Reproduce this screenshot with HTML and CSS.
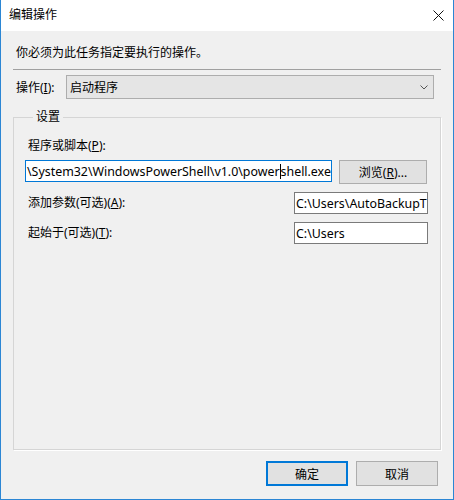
FILE: index.html
```html
<!DOCTYPE html>
<html lang="zh-CN">
<head>
<meta charset="utf-8">
<title>编辑操作</title>
<link rel="stylesheet" href="styles.css">
</head>
<body>
<div class="window">
  <div class="titlebar">
    <span class="title">编辑操作</span>
    <svg class="close" width="11" height="11" viewBox="0 0 11 11"><path d="M0.5 0.5 L10.5 10.5 M10.5 0.5 L0.5 10.5" stroke="#111" stroke-width="1" fill="none"/></svg>
  </div>
  <div class="content">
    <div class="desc">你必须为此任务指定要执行的操作。</div>
    <div class="sep"></div>
    <div class="action-row">
      <span class="action-label">操作(<u>I</u>):</span>
      <div class="select">
        <span>启动程序</span>
        <svg class="chev" width="8" height="5" viewBox="0 0 8 5"><path d="M0.5 0.5 L4 4 L7.5 0.5" stroke="#555" stroke-width="1" fill="none"/></svg>
      </div>
    </div>
    <fieldset class="group">
      <legend>设置</legend>
      <div class="lbl first">程序或脚本(<u>P</u>):</div>
      <div class="prog-row">
        <div class="input prog"><span class="path">\System32\WindowsPowerShell\v1.0\power<span class="caret"></span>shell.exe</span></div>
        <div class="btn browse">浏览(<u>R</u>)...</div>
      </div>
      <div class="field-row">
        <span class="lbl">添加参数(可选)(<u>A</u>):</span>
        <div class="input small">C:\Users\AutoBackupT</div>
      </div>
      <div class="field-row">
        <span class="lbl">起始于(可选)(<u>T</u>):</span>
        <div class="input small">C:\Users</div>
      </div>
    </fieldset>
  </div>
  <div class="footer">
    <div class="btn ok">确定</div>
    <div class="btn">取消</div>
  </div>
</div>
</body>
</html>
```
FILE: styles.css
```css
html, body {
  margin: 0;
  padding: 0;
}
body {
  font-family: "Noto Sans", "Noto Sans CJK SC", sans-serif;
  font-size: 12px;
  color: #000;
}
.window {
  width: 454px;
  height: 500px;
  box-sizing: border-box;
  border: 1px solid #2b86d4;
  border-top: none;
  background: #f0f0f0;
  display: flex;
  flex-direction: column;
}
.titlebar {
  height: 31px;
  flex: none;
  background: #fff;
  display: flex;
  align-items: center;
  justify-content: space-between;
  padding: 0 9px 0 8px;
}
.title {
  line-height: 16px;
  margin-top: -1px;
}
.close {
  display: block;
  margin-top: -1px;
}
.content {
  flex: 1;
  display: flex;
  flex-direction: column;
  padding: 0 12px;
}
.desc {
  margin-top: 14px;
  line-height: 16px;
  padding-left: 3px;
}
.sep {
  margin-top: 8px;
  height: 1px;
  background: #a0a0a0;
}
.action-row {
  margin-top: 5px;
  display: flex;
  align-items: center;
  padding-left: 3px;
  padding-right: 7px;
}
.action-label {
  width: 50px;
  flex: none;
}
.select {
  flex: 1;
  height: 24px;
  box-sizing: border-box;
  border: 1px solid #adadad;
  background: #e5e5e5;
  display: flex;
  align-items: center;
  justify-content: space-between;
  padding: 0 5px 0 3px;
}
.chev {
  display: block;
}
.group {
  flex: 1;
  margin: 10px 0 0 0;
  padding: 0 12px 0 14px;
  border: 1px solid #d5d5d5;
  box-shadow: 1px 1px 0 #fff;
  min-width: 0;
}
.group legend {
  margin-left: 5px;
  padding: 0 3px;
  line-height: 16px;
}
.lbl {
  line-height: 16px;
}
.lbl.first {
  margin-top: 13px;
}
.prog-row {
  margin-top: 6px;
  margin-left: -3px;
  display: flex;
  align-items: flex-start;
  gap: 7px;
}
.input {
  height: 22px;
  box-sizing: border-box;
  background: #fff;
  border: 1px solid #7a7a7a;
  white-space: nowrap;
  overflow: hidden;
  display: flex;
  align-items: center;
  padding-left: 1px;
  font-size: 12.4px;
}
.input.prog {
  width: 307px;
  border-color: #0078d7;
}
.path {
  display: inline-flex;
  align-items: center;
}
.caret {
  display: inline-block;
  width: 1px;
  height: 15px;
  background: #000;
}
.btn {
  height: 25px;
  box-sizing: border-box;
  border: 1px solid #adadad;
  background: #e1e1e1;
  display: flex;
  align-items: center;
  justify-content: center;
  width: 82px;
}
.browse {
  width: 88px;
  height: 24px;
}
.field-row {
  margin-top: 8px;
  display: flex;
  align-items: center;
  justify-content: space-between;
}
.input.small {
  width: 134px;
}
.footer {
  flex: none;
  display: flex;
  justify-content: flex-end;
  gap: 8px;
  padding: 11px 15px 13px 0;
}
.btn.ok {
  border: 2px solid #0078d7;
}
```
